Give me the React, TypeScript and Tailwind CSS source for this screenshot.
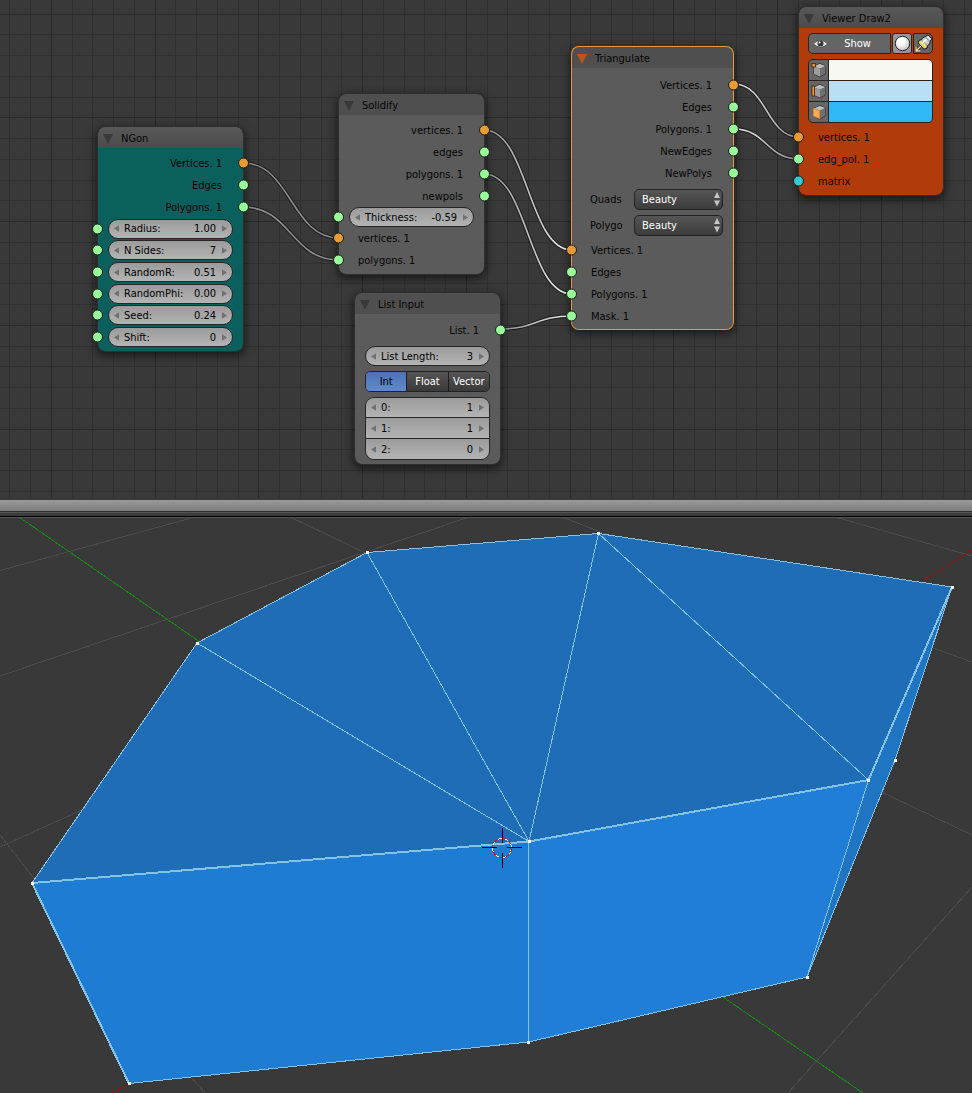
import React from "react";

const ORANGE = "bg-[#e69b35]";
const GREEN = "bg-[#98fa98]";
const CYAN = "bg-[#33cbd0]";

function Socket({ side, color }: { side: "left" | "right"; color: string }) {
  return (
    <span
      className={`absolute top-1/2 size-[11px] -translate-y-1/2 rounded-full border border-[#1c1c1c] ${
        side === "left" ? "-left-[6px]" : "-right-[6px]"
      } ${color}`}
    />
  );
}

function Output({ label, color = GREEN }: { label: string; color?: string }) {
  return (
    <div className="relative flex h-[22px] items-center justify-end pt-[2px] pr-[21px]">
      {label}
      <Socket side="right" color={color} />
    </div>
  );
}

function Input({ label, color = GREEN }: { label: string; color?: string }) {
  return (
    <div className="relative flex h-[22px] items-center pt-[2px] pl-[19px]">
      {label}
      <Socket side="left" color={color} />
    </div>
  );
}

function Arrow({ dir }: { dir: "left" | "right" }) {
  return (
    <svg width="5" height="7" viewBox="0 0 5 7" className="shrink-0" aria-hidden="true">
      <path d={dir === "left" ? "M5 0.3V6.7L0 3.5Z" : "M0 0.3V6.7L5 3.5Z"} fill="#707070" />
    </svg>
  );
}

function NumberField({
  label,
  value,
  shape = "rounded-full border border-[#262626] h-5",
}: {
  label: string;
  value: string;
  shape?: string;
}) {
  return (
    <label
      className={`flex w-full items-center bg-linear-to-b from-[#9b9b9b] to-[#b4b4b4] px-[5px] text-black ${shape}`}
    >
      <Arrow dir="left" />
      <span className="pt-px pl-[5px] whitespace-nowrap">{label}</span>
      <input
        className="w-0 min-w-0 flex-1 bg-transparent pt-px pr-[6px] text-right outline-none"
        inputMode="decimal"
        defaultValue={value}
      />
      <Arrow dir="right" />
    </label>
  );
}

function SocketField({ label, value }: { label: string; value: string }) {
  return (
    <div className="relative flex items-center px-[10px]">
      <Socket side="left" color={GREEN} />
      <NumberField label={label} value={value} />
    </div>
  );
}

function Node({
  title,
  place,
  body,
  header = "bg-[#4e4e4e]/85",
  selected = false,
  children,
}: {
  title: string;
  place: string;
  body: string;
  header?: string;
  selected?: boolean;
  children: React.ReactNode;
}) {
  return (
    <section className={`absolute rounded-[7px] shadow-[0_3px_9px_2px_rgba(0,0,0,0.55)] ${place} ${body}`}>
      <span
        className={`pointer-events-none absolute inset-0 rounded-[7px] ${
          selected ? "shadow-[0_0_0_1px_#e69b3d]" : "shadow-[0_0_0_1px_#2f2f2f]"
        }`}
      />
      <header className={`flex h-[21px] items-center rounded-t-[7px] pt-[2px] pl-[5px] ${header}`}>
        <button type="button" aria-label={`Collapse ${title}`} className="mr-[8px] flex">
          <svg width="10" height="10" viewBox="0 0 10 10" aria-hidden="true">
            <path d="M0 0H10L5 10Z" fill={selected ? "#c05318" : "#393939"} />
          </svg>
        </button>
        <h2>{title}</h2>
      </header>
      {children}
    </section>
  );
}

function ModeSelect({ label }: { label: string }) {
  return (
    <label className="flex h-[26px] items-center pr-[10px] pl-[18px]">
      <span className="w-[44px] pt-px">{label}</span>
      <span className="relative flex flex-1">
        <select className="h-[21px] w-full appearance-none rounded-[5px] border border-[#222] bg-linear-to-b from-[#565656] to-[#3c3c3c] pt-px pl-[7px] text-white">
          <option>Beauty</option>
        </select>
        <svg
          width="6"
          height="15"
          viewBox="0 0 6 15"
          className="pointer-events-none absolute top-[3px] right-[3px]"
          aria-hidden="true"
        >
          <path d="M0 6H6L3 0ZM0 8.5H6L3 14.5Z" fill="#c4c4c4" />
        </svg>
      </span>
    </label>
  );
}

function CubeIcon({ part }: { part: "vertex" | "edge" | "face" }) {
  return (
    <svg width="18" height="18" viewBox="0 0 18 18" aria-hidden="true">
      <path d="M9.5 2.5L15.5 5V12.5L10 16L4 13V5.5Z" fill="#3a3a3a" stroke="#282828" strokeWidth="1" />
      <path d="M4 5.5L9.5 2.7L15.5 5L10 7.8Z" fill="#bcbcbc" />
      <path d="M4 5.5L10 7.8V15.8L4 13Z" fill="#9c9c9c" />
      <path d="M15.5 5L10 7.8V15.8L15.5 12.5Z" fill="#707070" />
      {part === "vertex" && <rect x="2" y="2.5" width="3.5" height="3.5" fill="#f09433" stroke="#3b2208" strokeWidth="0.8" />}
      {part === "edge" && <rect x="2" y="4" width="2.5" height="10" fill="#f09433" stroke="#3b2208" strokeWidth="0.8" />}
      {part === "face" && <path d="M3.5 5.5L9.5 8V15.5L3.5 13Z" fill="#f8ac5c" stroke="#e8862c" strokeWidth="0.9" />}
    </svg>
  );
}

function SwatchRow({ part, name, color }: { part: "vertex" | "edge" | "face"; name: string; color: string }) {
  return (
    <div className="flex h-5">
      <button
        type="button"
        aria-label={`Display ${name}`}
        className="flex w-5 items-center justify-center border-r border-[#2b211c] bg-[#666]"
      >
        <CubeIcon part={part} />
      </button>
      <input
        type="color"
        aria-label={`${name} colour`}
        defaultValue={color}
        className="h-full min-w-0 flex-1 appearance-none border-0 bg-transparent p-0 [&::-webkit-color-swatch]:rounded-none [&::-webkit-color-swatch]:border-0 [&::-webkit-color-swatch-wrapper]:p-0"
      />
    </div>
  );
}

const STEP = 20.75;
const gridLines = (origin: number, count: number, majorAt: number) =>
  Array.from({ length: count }, (_, i) => ({
    at: Math.floor(origin + i * STEP),
    major: i % 5 === majorAt,
  }));

function Grid() {
  const columns = gridLines(9.9, 140, 2);
  const rows = gridLines(14.2, 24, 0);
  const all = [
    ...columns.map((c) => ({ x: c.at, y: 0, w: 1, h: 498, major: c.major })),
    ...rows.map((r) => ({ x: 0, y: r.at, w: 2920, h: 1, major: r.major })),
  ].sort((a, b) => Number(a.major) - Number(b.major));
  return (
    <svg className="absolute inset-0 size-full" aria-hidden="true">
      {all.map((l, i) => (
        <rect key={i} x={l.x} y={l.y} width={l.w} height={l.h} fill={l.major ? "#292929" : "#303030"} />
      ))}
    </svg>
  );
}

const links = [
  { x1: 243, y1: 163, x2: 339, y2: 238, from: "#8e8e8e", to: "#8e8e8e" },
  { x1: 243, y1: 207, x2: 339, y2: 260, from: "#8e8e8e", to: "#8e8e8e" },
  { x1: 484, y1: 130, x2: 572, y2: 250, from: "#8e8e8e", to: "#f4f4f4" },
  { x1: 484, y1: 174, x2: 572, y2: 294, from: "#8e8e8e", to: "#f4f4f4" },
  { x1: 500, y1: 329, x2: 572, y2: 316, from: "#8e8e8e", to: "#f4f4f4" },
  { x1: 734, y1: 84, x2: 799, y2: 137, from: "#f4f4f4", to: "#8e8e8e" },
  { x1: 734, y1: 129, x2: 799, y2: 159, from: "#f4f4f4", to: "#8e8e8e" },
];

function Links() {
  return (
    <svg className="absolute inset-0 size-full" aria-hidden="true">
      {links.map((l, i) => {
        const mid = (l.x1 + l.x2) / 2;
        const d = `M${l.x1} ${l.y1}C${mid} ${l.y1} ${mid} ${l.y2} ${l.x2} ${l.y2}`;
        return (
          <g key={i} fill="none">
            <linearGradient id={`link${i}`} gradientUnits="userSpaceOnUse" x1={l.x1} y1="0" x2={l.x2} y2="0">
              <stop offset="0" stopColor={l.from} />
              <stop offset="1" stopColor={l.to} />
            </linearGradient>
            <path d={d} stroke="#1b1b1b" strokeWidth="3.4" />
            <path d={d} stroke={`url(#link${i})`} strokeWidth="1.6" />
          </g>
        );
      })}
    </svg>
  );
}

function NodeEditor() {
  return (
    <div className="relative isolate h-[500px] shrink-0 overflow-hidden bg-[#393939]">
      <Grid />
      <Links />

      <Node
        title="NGon"
        place="left-[98px] top-[127px] w-[145px]"
        body="bg-[#0b5f5d] pb-[3px]"
        header="bg-linear-to-b from-[#585858] to-[#4c4c4c]"
      >
        <div className="pt-[4px]">
          <Output label="Vertices. 1" color={ORANGE} />
          <Output label="Edges" />
          <Output label="Polygons. 1" />
        </div>
        <div className="grid h-[130px] auto-rows-fr">
          <SocketField label="Radius:" value="1.00" />
          <SocketField label="N Sides:" value="7" />
          <SocketField label="RandomR:" value="0.51" />
          <SocketField label="RandomPhi:" value="0.00" />
          <SocketField label="Seed:" value="0.24" />
          <SocketField label="Shift:" value="0" />
        </div>
      </Node>

      <Node title="Solidify" place="left-[339px] top-[94px] w-[145px]" body="bg-[#5f5f5f]/90 pb-[3px]">
        <div className="pt-[4px]">
          <Output label="vertices. 1" color={ORANGE} />
          <Output label="edges" />
          <Output label="polygons. 1" />
          <Output label="newpols" />
          <SocketField label="Thickness:" value="-0.59" />
          <Input label="vertices. 1" color={ORANGE} />
          <Input label="polygons. 1" />
        </div>
      </Node>

      <Node title="List Input" place="left-[355px] top-[293px] w-[145px]" body="bg-[#5f5f5f]/90 pb-[4px]">
        <div className="pt-[5px]">
          <Output label="List. 1" />
        </div>
        <div className="flex flex-col gap-[5px] px-[10px] pt-[5px]">
          <NumberField label="List Length:" value="3" />
          <div className="flex h-[21px] divide-x divide-[#1c1c1c] overflow-hidden rounded-[5px] border border-[#222] text-white">
            <button type="button" aria-pressed="true" className="flex-1 bg-linear-to-b from-[#4c72b4] to-[#6089cf] text-black">
              Int
            </button>
            <button type="button" aria-pressed="false" className="flex-1 bg-linear-to-b from-[#555] to-[#3a3a3a]">
              Float
            </button>
            <button type="button" aria-pressed="false" className="flex-1 bg-linear-to-b from-[#555] to-[#3a3a3a]">
              Vector
            </button>
          </div>
          <div className="divide-y divide-[#262626] overflow-hidden rounded-[9px] border border-[#262626]">
            <NumberField label="0:" value="1" shape="h-5" />
            <NumberField label="1:" value="1" shape="h-[21px]" />
            <NumberField label="2:" value="0" shape="h-5" />
          </div>
        </div>
      </Node>

      <Node title="Triangulate" place="left-[572px] top-[47px] w-[161px]" body="bg-[#5f5f5f]/90 pb-[2px]" selected>
        <div className="pt-[6px]">
          <Output label="Vertices. 1" color={ORANGE} />
          <Output label="Edges" />
          <Output label="Polygons. 1" />
          <Output label="NewEdges" />
          <Output label="NewPolys" />
        </div>
        <div className="pt-[2px] pb-px">
          <ModeSelect label="Quads" />
          <ModeSelect label="Polygo" />
        </div>
        <Input label="Vertices. 1" color={ORANGE} />
        <Input label="Edges" />
        <Input label="Polygons. 1" />
        <Input label="Mask. 1" />
      </Node>

      <Node
        title="Viewer Draw2"
        place="left-[799px] top-[7px] w-[144px]"
        body="bg-[#b23b0b] pb-[3px]"
        header="bg-linear-to-b from-[#585858] to-[#4c4c4c]"
      >
        <div className="flex flex-col gap-[5px] pt-[5px] pr-[10px] pl-[9px]">
          <div className="flex h-[21px] gap-px">
            <button
              type="button"
              className="flex flex-1 items-center rounded-l-[5px] border border-[#30211b] bg-[#656565] pl-[4px] text-white"
            >
              <svg width="15" height="10" viewBox="0 0 15 10" aria-hidden="true">
                <path d="M0.5 5Q7.5 -2.5 14.5 5Q7.5 11.5 0.5 5Z" fill="#e8e8e8" stroke="#333" strokeWidth="0.6" />
                <circle cx="7.5" cy="4.6" r="3" fill="#333" />
                <circle cx="6.6" cy="3.6" r="1" fill="#fff" />
              </svg>
              <span className="flex-1 pt-px pr-[3px] text-center">Show</span>
            </button>
            <button
              type="button"
              aria-label="Shading"
              className="flex w-5 items-center justify-center rounded-[3px] border border-[#30211b] bg-[#979797]"
            >
              <svg width="17" height="17" viewBox="0 0 17 17" className="shrink-0" aria-hidden="true">
                <radialGradient id="ball" cx="0.4" cy="0.35" r="0.7">
                  <stop offset="0.3" stopColor="#fff" />
                  <stop offset="1" stopColor="#bdbdbd" />
                </radialGradient>
                <circle cx="8.5" cy="8.5" r="7.2" fill="url(#ball)" stroke="#222" strokeWidth="1" />
              </svg>
            </button>
            <button
              type="button"
              aria-label="Bake"
              className="flex w-5 items-center justify-center rounded-r-[5px] border border-[#30211b] bg-[#656565]"
            >
              <svg width="19" height="19" viewBox="0 0 19 19" className="shrink-0" aria-hidden="true">
                <path
                  d="M11.5 2.5L14 0.8L18 4.8L16.3 7.2L15.6 10L13.6 11.6L13.2 14L10 15.3L4 9L5.2 6.2L7.6 5.6L9 3.4Z"
                  fill="#8d8d8d"
                  stroke="#222"
                  strokeWidth="1"
                  strokeLinejoin="round"
                />
                <path d="M12.3 3L14 1.8L17 4.9L15.8 6.6Z" fill="#ececec" />
                <path d="M9.4 4.2L11.4 3.6L15.3 7.5L14.8 9.6L13 11L8 5.9Z" fill="#cfcfcf" />
                <path d="M5.6 7L7.6 6.4L12.6 11.4L12.2 13.4L10 14.3L5 9Z" fill="#e9dc72" />
                <path d="M8.2 9.4L12.4 5.2" stroke="#fff" strokeWidth="1.6" />
                <path d="M6.8 12.2L2.2 16.8M2 12.6V17H6.4" fill="none" stroke="#3a3216" strokeWidth="2.8" />
                <path d="M6.8 12.2L2.2 16.8M2 12.6V17H6.4" fill="none" stroke="#e2d9a0" strokeWidth="1.3" />
              </svg>
            </button>
          </div>
          <div className="flex flex-col gap-px overflow-hidden rounded-[5px] border border-[#2b211c] bg-[#2b211c]">
            <SwatchRow part="vertex" name="Vertices" color="#f8f8f2" />
            <SwatchRow part="edge" name="Edges" color="#bbdff2" />
            <SwatchRow part="face" name="Faces" color="#30b7f5" />
          </div>
        </div>
        <div className="pt-[3px]">
          <Input label="vertices. 1" color={ORANGE} />
          <Input label="edg_pol. 1" />
          <Input label="matrix" color={CYAN} />
        </div>
      </Node>
    </div>
  );
}

const floorLines = [
  "M0 570.5L195 517",
  "M0 676L469 517",
  "M290 517L368 554",
  "M562 517L606 534",
  "M835 517L972 556",
  "M925 645L972 662",
  "M875 789L972 835",
  "M972 887L788 1093",
  "M0 847L84 809",
  "M0 835L36 881",
  "M191 1077L205 1093",
];

const vertices = [
  [197, 643],
  [367, 552],
  [598, 533],
  [952, 587],
  [868, 780],
  [529, 841],
  [32, 883],
  [129, 1083],
  [528, 1042],
  [807, 977],
  [895, 760],
];

function Viewport() {
  return (
    <svg
      className="min-h-[575px] w-full flex-1 bg-[#393939]"
      viewBox="0 518 972 575"
      preserveAspectRatio="xMidYMid slice"
      shapeRendering="crispEdges"
      role="img"
      aria-label="3D view"
    >
      <path d={floorLines.join("")} stroke="#4b4b4b" fill="none" />
      <path d="M19 517L200 642M720 995L863 1093" stroke="#148a14" fill="none" />
      <path d="M972 550L920 583M129 1084L112 1093" stroke="#861616" fill="none" />

      <path d="M952 587L868.5 780L807 977L895 760Z" fill="#2075c3" />
      <path d="M197 643L367 552.5L598.5 533.5L952 587L868.5 780L529 841.5L32 883Z" fill="#1f6db6" />
      <path d="M32 883L529 841.5L528.5 1042L129 1083.5Z" fill="#1f7cd3" />
      <path d="M529 841.5L868.5 780L807 977L528.5 1042Z" fill="#207ed6" />

      <g fill="none" stroke="#84c3e6">
        <path d="M32 883L197 643L367 552.5L598.5 533.5L952 587L895 760L807 977L528.5 1042L129 1083.5" />
        <path d="M529 841.5L197 643M529 841.5L367 552.5M529 841.5L598.5 533.5L868.5 780L807 977M529 841.5L528.5 1042" />
        <path d="M952 587L868.5 780L529 841.5L32 883L129 1083.5" strokeWidth="2" />
      </g>
      {vertices.map(([x, y]) => (
        <rect key={`${x}-${y}`} x={x - 1} y={y - 1} width="3" height="3" fill="#f8f8f2" />
      ))}

      <circle cx="502" cy="848" r="9.5" fill="none" stroke="#fff" />
      <circle cx="502" cy="848" r="9.5" fill="none" stroke="#f00" strokeDasharray="3.7 3.7" />
      <path d="M502.5 828V843M502.5 853V868M482 847.5H497M507 847.5H522" stroke="#000" />
    </svg>
  );
}

export default function App() {
  return (
    <main className="flex min-h-screen flex-col bg-[#393939] font-['DejaVu_Sans_Condensed','DejaVu_Sans',sans-serif] text-[11px] leading-[14px] text-[#050505]">
      <NodeEditor />
      <div className="shrink-0" role="separator">
        <div className="h-[11px] bg-linear-to-b from-[#999] to-[#7c7c7c]" />
        <div className="h-px bg-[#303030]" />
        <div className="h-px bg-[#555]" />
        <div className="h-[3px] bg-[#3c3c3c]" />
        <div className="h-px bg-black" />
        <div className="h-px bg-[#555]" />
      </div>
      <Viewport />
    </main>
  );
}
